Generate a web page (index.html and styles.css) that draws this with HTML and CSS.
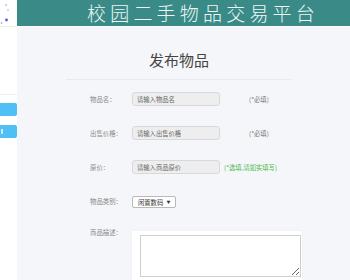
FILE: index.html
```html
<!DOCTYPE html>
<html lang="zh-CN">
<head>
    <meta charset="UTF-8">
    <title>发布物品</title>
    <link rel="stylesheet" href="styles.css">
</head>
<body>
    <div class="sidebar">
        <div class="side-top">
            <svg width="17" height="26" viewBox="0 0 17 26">
                <circle cx="6" cy="5" r="0.8" fill="#8a8cf0"/>
                <circle cx="8" cy="10" r="0.8" fill="#9a9cf2"/>
                <circle cx="6.5" cy="20" r="1.4" fill="#4f55ee"/>
                <circle cx="1.5" cy="23" r="0.8" fill="#8a8cf0"/>
            </svg>
        </div>
        <div class="side-gap"></div>
        <div class="side-menu">
            <div class="side-btn"></div>
            <div class="side-btn"><span class="side-mark"></span></div>
        </div>
    </div>

    <div class="main">
        <div class="header">校园二手物品交易平台</div>

        <div class="content">
            <div class="publish">
                <h1 class="title">发布物品</h1>

                <div class="form">
                    <div class="row">
                        <label class="label">物品名：</label>
                        <input class="field" type="text" placeholder="请输入物品名">
                        <span class="hint">(*必填)</span>
                    </div>
                    <div class="row">
                        <label class="label">出售价格：</label>
                        <input class="field" type="text" placeholder="请输入出售价格">
                        <span class="hint">(*必填)</span>
                    </div>
                    <div class="row">
                        <label class="label">原价：</label>
                        <input class="field" type="text" placeholder="请输入商品原价">
                        <span class="hint green">(*选填,请如实填写)</span>
                    </div>
                    <div class="row">
                        <label class="label">物品类别：</label>
                        <div class="select">闲置数码 <span class="arrow">▼</span></div>
                    </div>
                    <div class="row desc">
                        <label class="label">商品描述：</label>
                        <div class="panel">
                            <textarea class="area"></textarea>
                        </div>
                    </div>
                </div>
            </div>
        </div>
    </div>
</body>
</html>
```

FILE: styles.css
```css
html, body {
    margin: 0;
    padding: 0;
    height: 100%;
    overflow: hidden;
}

body {
    display: flex;
    font-family: "Noto Sans CJK SC", "Liberation Sans", sans-serif;
    background: #f4f6f9;
    color: #333;
}

/* 侧边栏 */
.sidebar {
    width: 17px;
    flex-shrink: 0;
    background: #fff;
    display: flex;
    flex-direction: column;
}

.side-top {
    height: 26px;
    border-bottom: 1px solid #eef0f3;
}

.side-top svg {
    display: block;
}

.side-gap {
    height: 67px;
    border-bottom: 1px solid #eef0f3;
}

.side-menu {
    padding-top: 8px;
    display: flex;
    flex-direction: column;
    gap: 9px;
}

.side-btn {
    height: 13px;
    background: #4fbff6;
    border-radius: 0 2px 2px 0;
    display: flex;
    align-items: center;
}

.side-mark {
    width: 2px;
    height: 5px;
    margin-left: 1px;
    background: rgba(255, 255, 255, 0.7);
}

/* 主体 */
.main {
    flex: 1;
    display: flex;
    flex-direction: column;
    min-width: 0;
}

.header {
    height: 26px;
    line-height: 26px;
    background: #3a8b88;
    color: #eef7f6;
    font-size: 19px;
    font-weight: 300;
    letter-spacing: 4.2px;
    padding-left: 70px;
    border-bottom: 1px solid #fafbfc;
    white-space: nowrap;
}

.content {
    flex: 1;
    padding-left: 49px;
}

.publish {
    width: 226px;
}

.title {
    margin: 0;
    padding-top: 23px;
    padding-bottom: 9px;
    font-size: 15px;
    line-height: 20px;
    font-weight: normal;
    color: #444;
    text-align: center;
    border-bottom: 1px solid #e8eaee;
}

.form {
    padding: 12px 0 0 24px;
    display: flex;
    flex-direction: column;
    gap: 20px;
}

.row {
    display: flex;
    align-items: center;
    height: 14px;
}

.label {
    width: 42px;
    flex-shrink: 0;
    font-size: 6.4px;
    color: #888;
    white-space: nowrap;
}

.field {
    box-sizing: border-box;
    width: 88px;
    height: 14px;
    padding: 0 4px;
    margin: 0;
    border: 1px solid #d6d8db;
    border-radius: 3px;
    background: #eeeeee;
    font-family: inherit;
    font-size: 6.3px;
    outline: none;
}

.field::placeholder {
    color: #666;
}

.hint {
    margin-left: 29px;
    font-size: 6.3px;
    color: #777;
    white-space: nowrap;
}

.hint.green {
    margin-left: 4px;
    color: #4cb84c;
}

.select {
    box-sizing: border-box;
    width: 44px;
    height: 12px;
    margin-top: 2px;
    padding-left: 5px;
    border: 1px solid #b8b8b8;
    border-radius: 2px;
    background: #fff;
    font-size: 6.3px;
    line-height: 10px;
    color: #333;
    white-space: nowrap;
}

.arrow {
    font-size: 4px;
    margin-left: 2px;
    vertical-align: 1px;
}

.row.desc {
    align-items: flex-start;
    height: auto;
}

.row.desc .label {
    line-height: 10px;
}

.panel {
    margin-top: 3px;
    width: 161px;
    padding: 4px 1px 40px 8px;
    background: #fff;
    box-shadow: 0 0 3px rgba(0, 0, 0, 0.04);
}

.area {
    display: block;
    box-sizing: border-box;
    width: 161px;
    height: 42px;
    margin: 0;
    border: 1px solid #cfcfcf;
    background: #fff;
}
```
